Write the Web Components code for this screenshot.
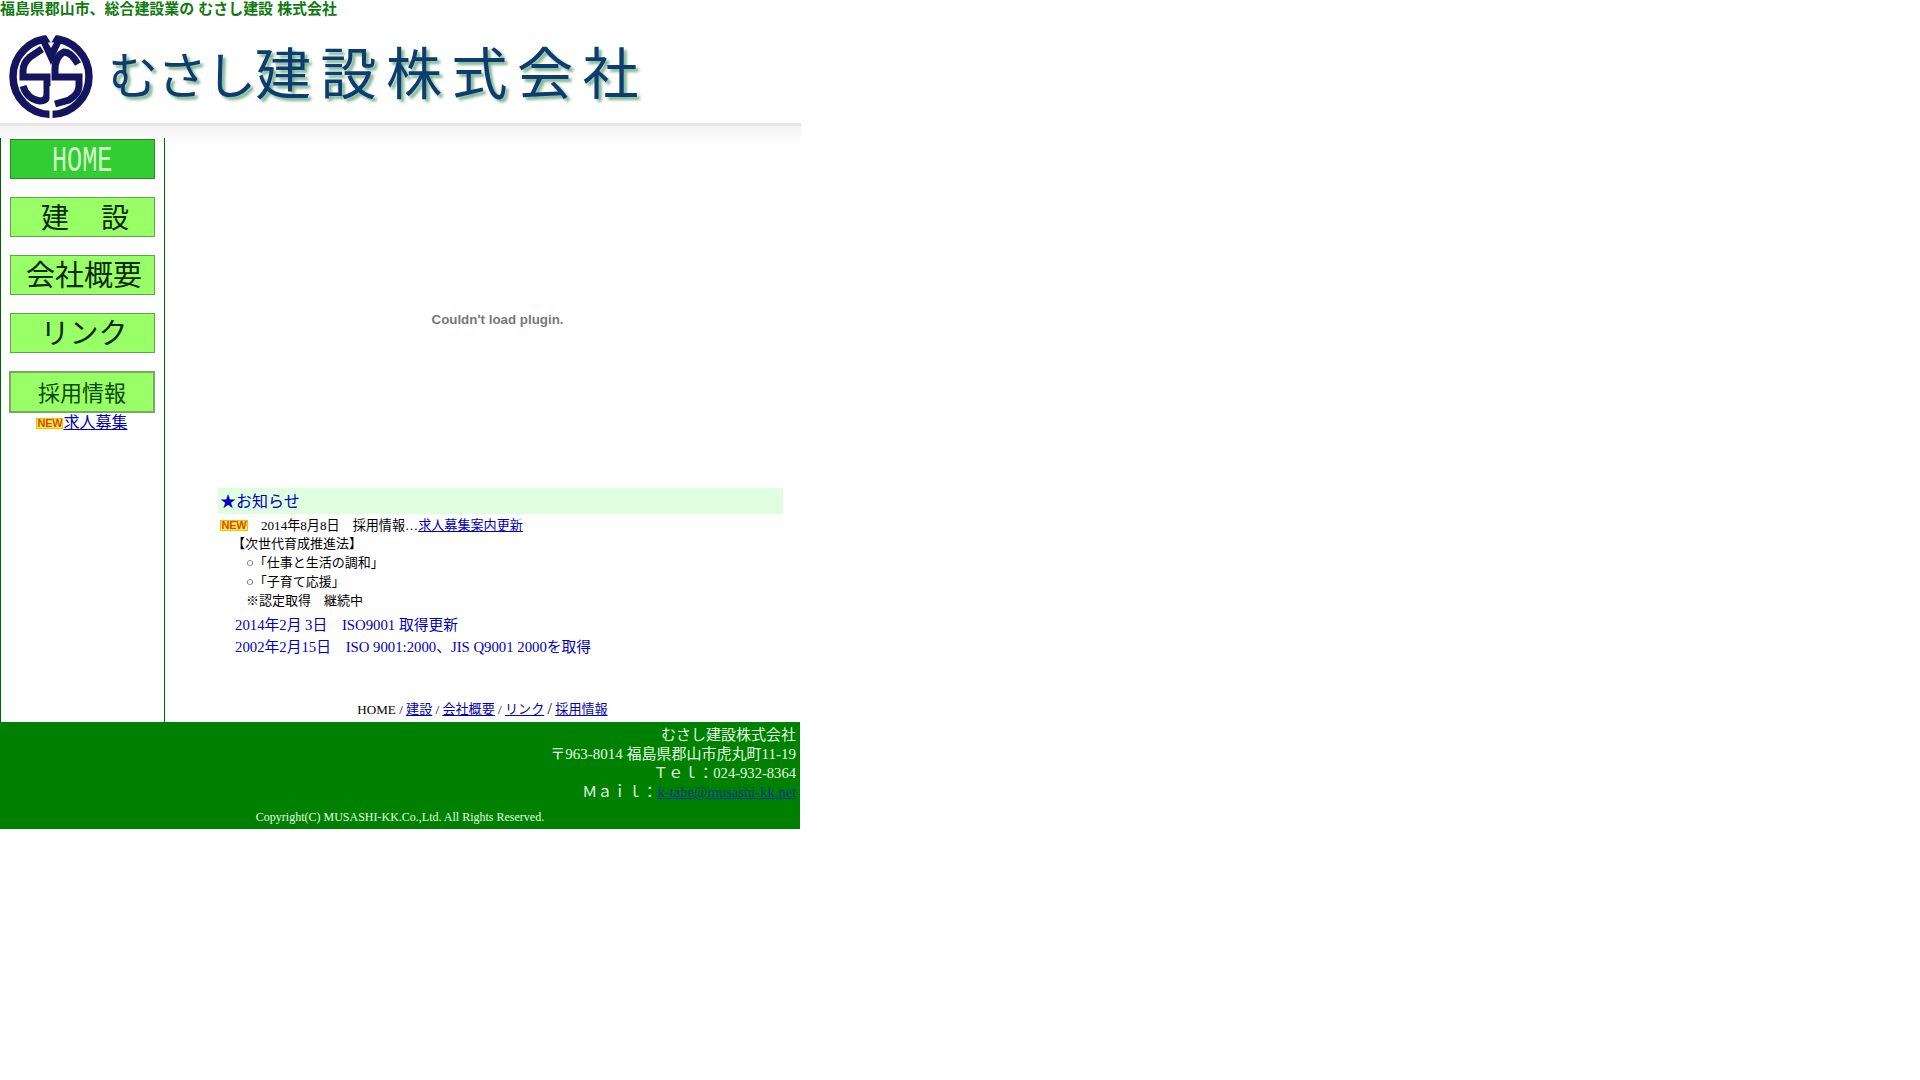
<!DOCTYPE html>
<html lang="ja">
<head>
<meta charset="utf-8">
<title>むさし建設 株式会社</title>
<style>
  html, body { margin: 0; padding: 0; background: #fff; }
  body { font-family: "Liberation Serif", "Noto Sans CJK JP", serif; color: #000; }
</style>
</head>
<body>
<musashi-page>
  <site-header></site-header>
  <side-nav slot="side">
    <nav-button current><span class="squeeze">HOME</span></nav-button>
    <nav-button wide>建設</nav-button>
    <nav-button big>会社概要</nav-button>
    <nav-button big>リンク</nav-button>
    <nav-button outline>採用情報</nav-button>
  </side-nav>
  <main-panel slot="main"></main-panel>
  <site-footer slot="footer"></site-footer>
</musashi-page>

<script>
const LINK = '#0000b4';

class MusashiPage extends HTMLElement {
  constructor() {
    super();
    this.attachShadow({ mode: 'open' });
    this.shadowRoot.innerHTML = `
      <style>
        :host { display: block; width: 800px; }
        .body { display: grid; grid-template-columns: 165px 635px; height: 584px;
                background: linear-gradient(#fafafa, #fff 10px); }
      </style>
      <slot></slot>
      <div class="body">
        <slot name="side"></slot>
        <slot name="main"></slot>
      </div>
      <slot name="footer"></slot>
    `;
  }
}

class SiteHeader extends HTMLElement {
  constructor() {
    super();
    this.attachShadow({ mode: 'open' });
    this.shadowRoot.innerHTML = `
      <style>
        :host { display: block; }
        h1 { margin: 0; height: 18px; font: bold 14.95px/18px "Liberation Sans", "Noto Sans CJK JP", sans-serif; color: #117a11; white-space: nowrap; }
        .banner { display: flex; gap: 15px; height: 105px; padding: 16px 0 0 9px; box-sizing: border-box; }
        svg { display: block; flex: none; }
        .name { margin-top: 8px; font: 400 56px/1 "Noto Sans CJK JP", sans-serif; color: #0c3d6e; letter-spacing: 9.500px;
                text-shadow: 3px 3px 3px rgba(40,130,70,.6); white-space: nowrap; }
        .kana { font-size: 50px; letter-spacing: -1px; }
        .fade { height: 15px; width: 801px; border-top: 3px solid #e6e6e6; box-sizing: border-box;
                background: linear-gradient(#f4f4f4, #fafafa); }
      </style>
      <h1>福島県郡山市、総合建設業の むさし建設 株式会社</h1>
      <div class="banner">
        <svg width="84" height="85" viewBox="0 0 84 85">
          <circle cx="42" cy="42.500" r="38" fill="none" stroke="#14145f" stroke-width="7.500"/>
          <path d="M31 7 L42 31 L53 7 L46 7 L42 14 L38 7Z" fill="#14145f"/>
          <path d="M36.500 0 L42 9 L47.500 0Z" fill="#fff"/>
          <path d="M33 15 L21 23 Q14 29 14 37 V43 H38 V60 Q38 67 31 67 Q18 65 14 52"
                fill="none" stroke="#14145f" stroke-width="7"/>
          <path d="M69 30 Q62 18 55 18 Q46 22 46 36 V43 H70 V52 Q70 60 60 66 L46 70"
                fill="none" stroke="#14145f" stroke-width="7"/>
          <rect x="40.500" y="52" width="3" height="33" fill="#fff"/>
        </svg>
        <div class="name"><span class="kana">むさし</span>建設株式会社</div>
      </div>
      <div class="fade"></div>
    `;
  }
}

class SideNav extends HTMLElement {
  constructor() {
    super();
    this.attachShadow({ mode: 'open' });
    this.shadowRoot.innerHTML = `
      <style>
        :host { display: block; box-sizing: border-box; width: 165px; height: 584px;
                border-left: 1px solid #006400; border-right: 1px solid #006400; }
        .list { display: flex; flex-direction: column; gap: 18px; padding: 1px 0 0 9px; }
        .jobs { display: flex; justify-content: center; align-items: center; margin: 0 0 0 -1px;
                font-size: 16px; line-height: 20px; }
        a { color: ${LINK}; }
      </style>
      <div class="list"><slot></slot></div>
      <div class="jobs"><new-badge></new-badge><a href="#">求人募集</a></div>
    `;
  }
}

class NavButton extends HTMLElement {
  constructor() {
    super();
    this.attachShadow({ mode: 'open' });
    this.shadowRoot.innerHTML = `
      <style>
        :host { display: flex; align-items: center; justify-content: center; box-sizing: border-box;
                width: 145px; height: 40px; padding-bottom: 3px; background: #99ff66; border: 1px solid #66a04a;
                font: 28px/1 "Noto Sans CJK JP", sans-serif; color: #0a2a0a; white-space: nowrap; }
        :host([current]) { background: #33cc33; color: #d0ffc8; border-color: #2a8a2a;
                font: 36px/1 "Liberation Mono", monospace; padding: 6px 0 0; }
        :host([wide]) { letter-spacing: 32px; text-indent: 37px; }
        :host([big]) { font-size: 29px; text-indent: 3px; }
        :host([outline]) { height: 42px; width: 146px; margin-left: -1px; border: 2px solid #7aa860;
                font-size: 22px; color: #0a4a0a; }
        ::slotted(.squeeze) { display: inline-block; transform: scaleX(.7); }
      </style>
      <slot></slot>
    `;
  }
}

class NewBadge extends HTMLElement {
  constructor() {
    super();
    this.attachShadow({ mode: 'open' });
    this.shadowRoot.innerHTML = `
      <style>
        :host { display: inline-block; box-sizing: border-box; width: 27px; height: 11px; flex: none; white-space: normal;
                background: #fff04a; border: 1px solid #eec000; overflow: hidden; }
        span { display: block; margin: 0 -2px; font: bold 11px/9px "Liberation Sans", sans-serif; letter-spacing: -.2px; color: #d8480a; text-align: center; }
      </style>
      <span>NEW</span>
    `;
  }
}

class MainPanel extends HTMLElement {
  constructor() {
    super();
    this.attachShadow({ mode: 'open' });
    this.shadowRoot.innerHTML = `
      <style>
        :host { display: flex; flex-direction: column; height: 584px; font-size: 13px; }
        .plugin { flex: none; height: 350px; margin-left: 53px; width: 559px; display: flex; align-items: center; justify-content: center;
                  padding-top: 13px; box-sizing: border-box;
                  font: bold 13.33px "Liberation Sans", sans-serif; color: #777; }
        .notice { margin-left: 53px; width: 565px; }
        h2 { margin: 0; height: 26px; padding-left: 2px; background: #e0ffe0; font: 16px/27px "Liberation Serif", "Noto Sans CJK JP", serif; color: #0000c0; }
        .row { display: flex; align-items: center; font-size: 13.1px; }
        .row new-badge { margin: 0 13px 0 2px; width: 28px; }
        .lines { margin-top: 2px; }
        .lines div { line-height: 19px; height: 19px; white-space: pre; }
        .lines div.row { height: 18px; }
        .i1 { padding-left: 14px; }
        .i2 { padding-left: 28px; }
        a { color: ${LINK}; }
        .blue { margin-top: 4px; padding-left: 17px; color: #0000c0; font-size: 14.75px; line-height: 22px; white-space: pre; }
        .crumb { margin: auto 0 3px 0; width: 635px; text-align: center; line-height: 19px; font-size: 13.1px; }
        .crumb span { font-size: 16px; }
      </style>
      <div class="plugin">Couldn't load plugin.</div>
      <section class="notice">
        <h2>★お知らせ</h2>
        <div class="lines">
          <div class="row"><new-badge></new-badge><span>2014年8月8日　採用情報…<a href="#">求人募集案内更新</a></span></div>
          <div class="i1">【次世代育成推進法】</div>
          <div class="i2">○「仕事と生活の調和」</div>
          <div class="i2">○「子育て応援」</div>
          <div class="i2">※認定取得　継続中</div>
        </div>
        <div class="blue">2014年2月 3日　ISO9001 取得更新<br>2002年2月15日　ISO 9001:2000、JIS Q9001 2000を取得</div>
      </section>
      <div class="crumb">HOME / <a href="#">建設</a> / <a href="#">会社概要</a> / <a href="#">リンク</a> <span>/</span> <a href="#">採用情報</a></div>
    `;
  }
}

class SiteFooter extends HTMLElement {
  constructor() {
    super();
    this.attachShadow({ mode: 'open' });
    this.shadowRoot.innerHTML = `
      <style>
        :host { display: block; box-sizing: border-box; height: 107px; padding: 4px 4px 0 0; background: #008000; color: #e0ffe0; font-size: 15px; line-height: 19px; }
        .addr { text-align: right; }
        .num, a { font-size: 14.6px; }
        a { color: #003399; }
        .copy { margin-top: 7px; text-align: center; font-size: 12px; line-height: 16px; padding-left: 4px; }
      </style>
      <div class="addr">むさし建設株式会社<br>〒963-8014 福島県郡山市虎丸町11-19<br>Ｔｅｌ：<span class="num">024-932-8364</span><br>Ｍａｉｌ：<a href="#">k-tabe@musashi-kk.net</a></div>
      <div class="copy">Copyright(C) MUSASHI-KK.Co.,Ltd. All Rights Reserved.</div>
    `;
  }
}

customElements.define('musashi-page', MusashiPage);
customElements.define('site-header', SiteHeader);
customElements.define('side-nav', SideNav);
customElements.define('nav-button', NavButton);
customElements.define('new-badge', NewBadge);
customElements.define('main-panel', MainPanel);
customElements.define('site-footer', SiteFooter);
</script>
</body>
</html>
